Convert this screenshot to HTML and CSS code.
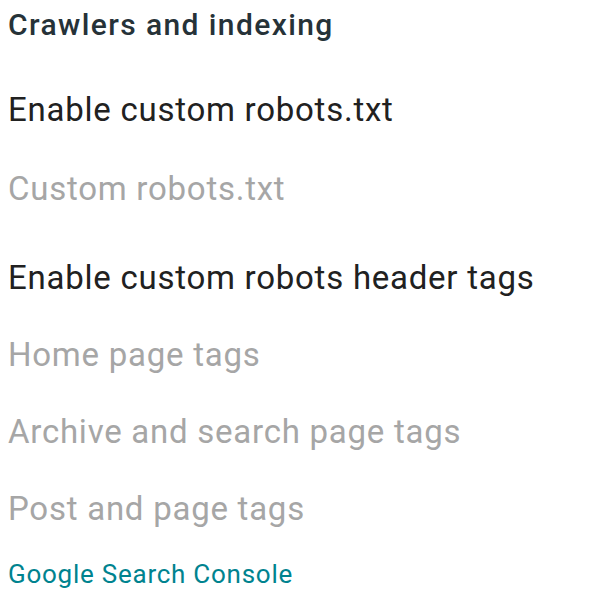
FILE: index.html
```html
<!DOCTYPE html>
<html>
<head>
<meta charset="utf-8">
<link rel="stylesheet" href="styles.css">
</head>
<body>
<section class="panel">
  <h2 class="title">Crawlers and indexing</h2>
  <div class="group first">
    <div class="item enabled">Enable custom robots.txt</div>
    <div class="item disabled sub">Custom robots.txt</div>
  </div>
  <div class="group">
    <div class="item enabled">Enable custom robots header tags</div>
    <div class="item disabled sub">Home page tags</div>
    <div class="item disabled sub">Archive and search page tags</div>
    <div class="item disabled sub">Post and page tags</div>
  </div>
  <a class="link" href="#">Google Search Console</a>
</section>
</body>
</html>
```
FILE: styles.css
```css
html, body {
  margin: 0;
  padding: 0;
  background: #ffffff;
}
.panel {
  padding: 7px 8px 0 8px;
  font-family: Roboto, "Noto Sans", sans-serif;
  display: flex;
  flex-direction: column;
  align-items: flex-start;
}
.title {
  margin: 0;
  font-size: 30px;
  font-weight: 500;
  color: #263238;
  letter-spacing: 1.4px;
  line-height: 36px;
}
.group {
  display: flex;
  flex-direction: column;
  margin-top: 49px;
}
.group.first {
  margin-top: 47px;
}
.item {
  font-size: 33px;
  line-height: 40px;
  letter-spacing: 0.75px;
}
.item.sub {
  margin-top: 37px;
}
.group.first .item.sub {
  margin-top: 39px;
}
.enabled { color: #212121; }
.disabled { color: #a6a6a6; }
.link {
  font-size: 26px;
  line-height: 32px;
  letter-spacing: 0.75px;
  color: #00838f;
  text-decoration: none;
  margin-top: 29px;
}
```
